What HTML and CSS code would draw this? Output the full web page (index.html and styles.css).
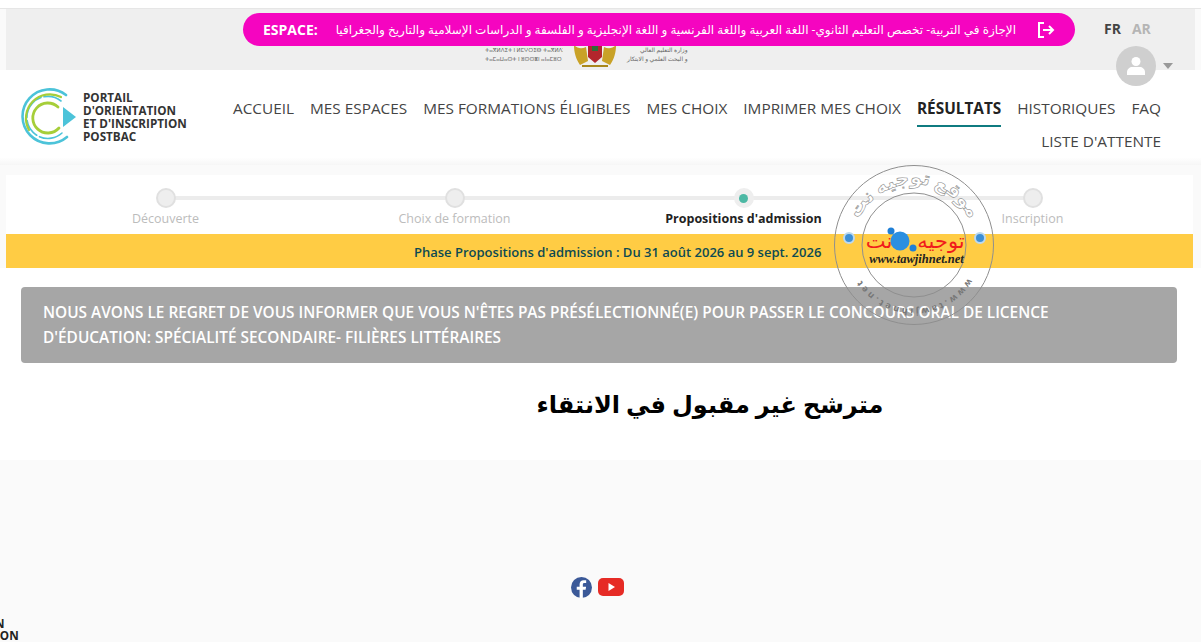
FILE: index.html
```html
<!DOCTYPE html>
<html lang="fr">
<head>
    <meta charset="UTF-8">
    <meta name="viewport" content="width=device-width, initial-scale=1.0">
    <title>Portail d'orientation et d'inscription postbac</title>
    <link rel="stylesheet" href="styles.css">
</head>
<body>
    <div class="top-line"></div>

    <!-- Top bar -->
    <div class="top-bar">
        <div class="ministry">
            <div class="ministry-tifinagh">ⵜⴰⴳⵍⴷⵉⵜ ⵏ ⵍⵎⵖⵔⵉⴱ ⵜⴰⴳⵍⴷⵉⵜ<br>ⵜⴰⵎⴰⵡⴰⵙⵜ ⵏ ⵓⵙⵙⴻⵏ ⴰⵏⴰⵎⵓⵔ ⵏ</div>
            <svg class="ministry-arms" viewBox="0 0 46 24">
                <path d="M2 2c4 4 8 4 12 2l2 14-8 4C4 16 2 10 2 2zM44 2c-4 4-8 4-12 2l-2 14 8 4c4-6 6-12 6-20z" fill="#c9a227"/>
                <path d="M16 0h14v14l-7 6-7-6z" fill="#b3262c"/>
                <path d="M20 2h6v6h-6z" fill="#2f6b3a"/>
                <path d="M10 22h26v2H10z" fill="#a8871c"/>
            </svg>
            <div class="ministry-ar" dir="rtl">وزارة التعليم العالي<br>و البحث العلمي و الابتكار</div>
        </div>
        <a class="espace-pill" href="#">
            <span class="espace-label">ESPACE:</span>
            <span class="espace-text" dir="rtl">الإجازة في التربية- تخصص التعليم الثانوي- اللغة العربية واللغة الفرنسية و اللغة الإنجليزية و الفلسفة و الدراسات الإسلامية والتاريخ والجغرافيا</span>
            <svg class="espace-icon" viewBox="0 0 18 18">
                <path d="M7 2H2v14h5" fill="none" stroke="#fff" stroke-width="2"/>
                <path d="M6 9h10M12 5l4 4-4 4" fill="none" stroke="#fff" stroke-width="2"/>
            </svg>
        </a>
        <div class="langs">
            <span class="lang-on">FR</span>
            <span class="lang-off">AR</span>
        </div>
        <div class="user-menu">
            <div class="avatar">
                <svg viewBox="0 0 20 20" width="20" height="20">
                    <circle cx="10" cy="5.5" r="4.5" fill="#fff"/>
                    <path d="M1 19v-3c0-3 3-5 5-5h8c2 0 5 2 5 5v3z" fill="#fff"/>
                </svg>
            </div>
            <span class="caret"></span>
        </div>
    </div>

    <!-- Header -->
    <header class="site-header">
        <a class="brand" href="#">
            <svg class="brand-mark" viewBox="1 1 56 56">
                <g fill="none" stroke-linecap="round">
                    <path d="M46 7A27 27 0 1 0 47 49" stroke="#4cc3d9" stroke-width="2.6"/>
                    <path d="M41 13A21 21 0 1 0 42 45" stroke="#4cc3d9" stroke-width="1.6" stroke-dasharray="18 3 26 3"/>
                    <path d="M41 9A24 24 0 0 0 9 42" stroke="#a6ce39" stroke-width="2.2"/>
                    <path d="M38 19A15 15 0 1 0 39 40" stroke="#a6ce39" stroke-width="2.8"/>
                </g>
                <path d="M43 19l13 10-13 10z" fill="#4cc3d9"/>
            </svg>
            <span class="brand-text">PORTAIL<br>D'ORIENTATION<br>ET D'INSCRIPTION<br>POSTBAC</span>
        </a>
        <nav class="main-nav">
            <a href="#">ACCUEIL</a>
            <a href="#">MES ESPACES</a>
            <a href="#">MES FORMATIONS ÉLIGIBLES</a>
            <a href="#">MES CHOIX</a>
            <a href="#">IMPRIMER MES CHOIX</a>
            <a href="#" class="active">RÉSULTATS</a>
            <a href="#">HISTORIQUES</a>
            <a href="#">FAQ</a>
            <a href="#">LISTE D'ATTENTE</a>
        </nav>
    </header>

    <!-- Stepper card -->
    <section class="card">
        <div class="stepper">
            <div class="step"><span class="dot"></span><span class="step-label">Découverte</span></div>
            <div class="step"><span class="dot"></span><span class="step-label">Choix de formation</span></div>
            <div class="step current"><span class="dot"></span><span class="step-label">Propositions d'admission</span></div>
            <div class="step last"><span class="dot"></span><span class="step-label">Inscription</span></div>
        </div>
        <div class="phase-banner">Phase Propositions d'admission : Du 31 août 2026 au 9 sept. 2026</div>
    </section>

    <main class="result-box">
        <div class="alert-grey">NOUS AVONS LE REGRET DE VOUS INFORMER QUE VOUS N'ÊTES PAS PRÉSÉLECTIONNÉ(E) POUR PASSER LE CONCOURS ORAL DE LICENCE D'ÉDUCATION: SPÉCIALITÉ SECONDAIRE- FILIÈRES LITTÉRAIRES</div>
        <h2 class="result-title" dir="rtl">مترشح غير مقبول في الانتقاء</h2>
    </main>

    <!-- Footer -->
    <footer class="site-footer">
        <div class="social">
            <svg viewBox="0 0 22 22" width="21" height="21">
                <circle cx="11" cy="11" r="11" fill="#3b5998"/>
                <path d="M12.4 22v-8.6h2.900l.5-3.300h-3.400V8c0-1 .4-1.600 1.700-1.600h1.800V3.500c-.5-.1-1.500-.2-2.600-.2-2.600 0-4.300 1.600-4.300 4.400v2.400H6v3.300h3v8.600z" fill="#fff"/>
            </svg>
            <svg viewBox="0 0 26 18" width="26" height="18">
                <rect width="26" height="18" rx="5" fill="#e62b25"/>
                <path d="M10.500 5l6.500 4-6.500 4z" fill="#fff"/>
            </svg>
        </div>
        <div class="foot-logo">
            <div class="foot-n">N</div>
            <div class="foot-ion">ION</div>
        </div>
    </footer>

    <!-- Watermark -->
    <svg class="watermark" viewBox="0 0 160 160" width="160" height="160">
        <defs>
            <path id="wmTop" d="M19 80A61 61 0 0 1 141 80"/>
            <path id="wmBottom" d="M140 100A63 63 0 0 1 20 100"/>
        </defs>
        <circle cx="80" cy="80" r="79.5" fill="none" stroke="#8f8f8f" stroke-width="1"/>
        <circle cx="80" cy="80" r="52" fill="none" stroke="#8f8f8f" stroke-width="1"/>
        <text class="wm-arc" dir="rtl"><textPath href="#wmTop" startOffset="50%" text-anchor="middle">موقع توجيه نت</textPath></text>
        <text class="wm-arc-small"><textPath href="#wmBottom" startOffset="50%" text-anchor="middle">www.tawjihnet.net</textPath></text>
        <circle cx="15" cy="73" r="5" fill="#3d8fd6" stroke="#bcd9f0" stroke-width="2"/>
        <circle cx="146" cy="73" r="5" fill="#3d8fd6" stroke="#bcd9f0" stroke-width="2"/>
        <text class="wm-name" x="45" y="83" text-anchor="middle">نت</text>
        <text class="wm-name" x="107" y="83" text-anchor="middle">توجيه</text>
        <circle cx="66" cy="76" r="9.500" fill="#2b8fe0"/>
        <circle cx="57" cy="66" r="3.500" fill="#1f7fd6"/>
        <circle cx="79" cy="83" r="3.500" fill="#1f7fd6"/>
        <text class="wm-url" x="82.500" y="98" text-anchor="middle">www.tawjihnet.net</text>
    </svg>
</body>
</html>
```
FILE: styles.css
```css
* {
    margin: 0;
    padding: 0;
    box-sizing: border-box;
}

html, body {
    height: 100%;
}

body {
    position: relative;
    display: flex;
    flex-direction: column;
    overflow: hidden;
    background: #fafafa;
    color: #333;
    font-family: 'Open Sans', 'DejaVu Sans', sans-serif;
}

a {
    color: inherit;
    text-decoration: none;
}

.top-line {
    height: 9px;
    flex: none;
    background: #fff;
    border-bottom: 1px solid #e6e6e6;
}

/* Top bar */
.top-bar {
    position: relative;
    display: flex;
    height: 61px;
    flex: none;
    margin: 0 6px;
    padding: 4px 0 0 237px;
    background: #efefef;
}

.ministry {
    position: absolute;
    top: 34px;
    left: 479px;
    display: flex;
    align-items: center;
    gap: 9px;
    height: 24px;
    color: #666;
    font-size: 6px;
    line-height: 9px;
}

.ministry-tifinagh {
    width: 78px;
    overflow: hidden;
    white-space: nowrap;
    font-size: 5.500px;
    text-align: right;
}

.ministry-arms {
    width: 46px;
    height: 24px;
}

.ministry-ar {
    font-size: 6px;
}

.espace-pill {
    position: relative;
    display: flex;
    align-items: center;
    width: 832px;
    height: 33px;
    padding: 0 20px;
    border-radius: 17px;
    background: #f505c0;
    color: #fff;
    font-size: 14px;
}

.espace-label {
    font-weight: 700;
    font-size: 14px;
}

.espace-text {
    flex: 1;
    overflow: hidden;
    margin-left: 4px;
    white-space: nowrap;
    font-size: 12px;
    text-align: right;
}

.espace-icon {
    width: 18px;
    height: 18px;
    margin-left: 21px;
}

.langs {
    display: flex;
    gap: 11px;
    margin: 6px 0 0 29px;
    font-size: 14px;
    font-weight: 700;
}

.lang-on {
    color: #444;
}

.lang-off {
    color: #b5b5b5;
}

.user-menu {
    position: absolute;
    top: 37px;
    right: 22px;
    display: flex;
    align-items: center;
    gap: 7px;
}

.avatar {
    display: flex;
    align-items: center;
    justify-content: center;
    width: 40px;
    height: 40px;
    border-radius: 50%;
    background: #cfcfcf;
}

.caret {
    border-top: 6px solid #999;
    border-left: 5px solid transparent;
    border-right: 5px solid transparent;
}

/* Header */
.site-header {
    display: flex;
    justify-content: space-between;
    height: 95px;
    flex: none;
    padding: 18px 40px 0 21px;
    background: linear-gradient(#fff 92%, #f6f6f6);
}

.brand {
    display: flex;
    align-items: flex-start;
    gap: 6px;
}

.brand-mark {
    width: 56px;
    height: 58px;
}

.brand-text {
    margin-top: 3px;
    color: #333;
    font-size: 11.700px;
    font-weight: 700;
    line-height: 13px;
    white-space: nowrap;
}

.main-nav {
    display: flex;
    flex-wrap: wrap;
    justify-content: flex-end;
    align-content: flex-start;
    width: 930px;
    column-gap: 16px;
}

.main-nav a {
    position: relative;
    height: 33px;
    padding-top: 8px;
    color: #444;
    font-size: 15.350px;
    line-height: 24px;
    white-space: nowrap;
}

.main-nav a.active {
    color: #222;
    font-weight: 700;
}

.main-nav a.active::after {
    content: "";
    position: absolute;
    left: 0;
    right: 0;
    bottom: -6px;
    height: 2px;
    background: #0f7b80;
}

/* Stepper card */
.card {
    flex: none;
    margin: 10px 8px 0 6px;
    background: #fff;
}

.stepper {
    display: grid;
    grid-template-columns: repeat(4, 289px);
    height: 59px;
    padding: 13px 0 0 15px;
}

.step {
    position: relative;
    display: flex;
    flex-direction: column;
    align-items: center;
    gap: 2px;
}

.step::after {
    content: "";
    position: absolute;
    top: 8px;
    left: 50%;
    width: 100%;
    height: 4px;
    background: #ececec;
}

.step.last::after {
    display: none;
}

.dot {
    position: relative;
    z-index: 1;
    display: flex;
    align-items: center;
    justify-content: center;
    width: 20px;
    height: 20px;
    border: 2px solid #e0e0e0;
    border-radius: 50%;
    background: #eee;
}

.step.current .dot {
    border-color: #eee;
}

.step.current .dot::before {
    content: "";
    width: 9px;
    height: 9px;
    border-radius: 50%;
    background: #4cb8a4;
}

.step-label {
    color: #bcbcbc;
    font-size: 12.500px;
    line-height: 18px;
    white-space: nowrap;
}

.step.current .step-label {
    color: #222;
    font-weight: 700;
}

.phase-banner {
    height: 34px;
    padding-left: 408px;
    background: #ffcc44;
    color: #0d4a52;
    font-size: 13px;
    font-weight: 600;
    line-height: 37px;
}

/* Result */
.result-box {
    height: 192px;
    flex: none;
    padding: 19px 24px 0 21px;
    background: #fff;
}

.alert-grey {
    height: 76px;
    padding: 13px 70px 13px 22px;
    border-radius: 4px;
    background: #a6a6a6;
    color: #fff;
    font-size: 15.400px;
    font-weight: 600;
    line-height: 25px;
}

.result-title {
    margin-top: 22px;
    padding-left: 222px;
    color: #000;
    font-family: 'Liberation Serif', 'DejaVu Sans', serif;
    font-size: 24px;
    font-weight: bold;
    line-height: 40px;
    text-align: center;
}

/* Footer */
.site-footer {
    flex: 1;
    display: flex;
    flex-direction: column;
}

.social {
    display: flex;
    justify-content: center;
    align-items: center;
    gap: 6px;
    height: 24px;
    margin: 115px 0 18px -6px;
}

.foot-logo {
    color: #222;
    font-size: 11.700px;
    font-weight: 700;
    line-height: 12px;
}

.foot-n {
    margin-left: -5px;
}

.foot-ion {
    margin-left: -4px;
}

/* Watermark */
.watermark {
    position: absolute;
    top: 165px;
    left: 834px;
}

.wm-arc {
    fill: #fff;
    stroke: #8f8f8f;
    stroke-width: 0.6;
    font-size: 19px;
    font-weight: bold;
}

.wm-arc-small {
    fill: #777;
    font-size: 9px;
    font-weight: bold;
    letter-spacing: 2.500px;
}

.wm-name {
    fill: #f01c1c;
    font-size: 21px;
}

.wm-url {
    fill: #222;
    font-family: 'Liberation Serif', serif;
    font-size: 12.500px;
    font-style: italic;
    font-weight: bold;
}
```
